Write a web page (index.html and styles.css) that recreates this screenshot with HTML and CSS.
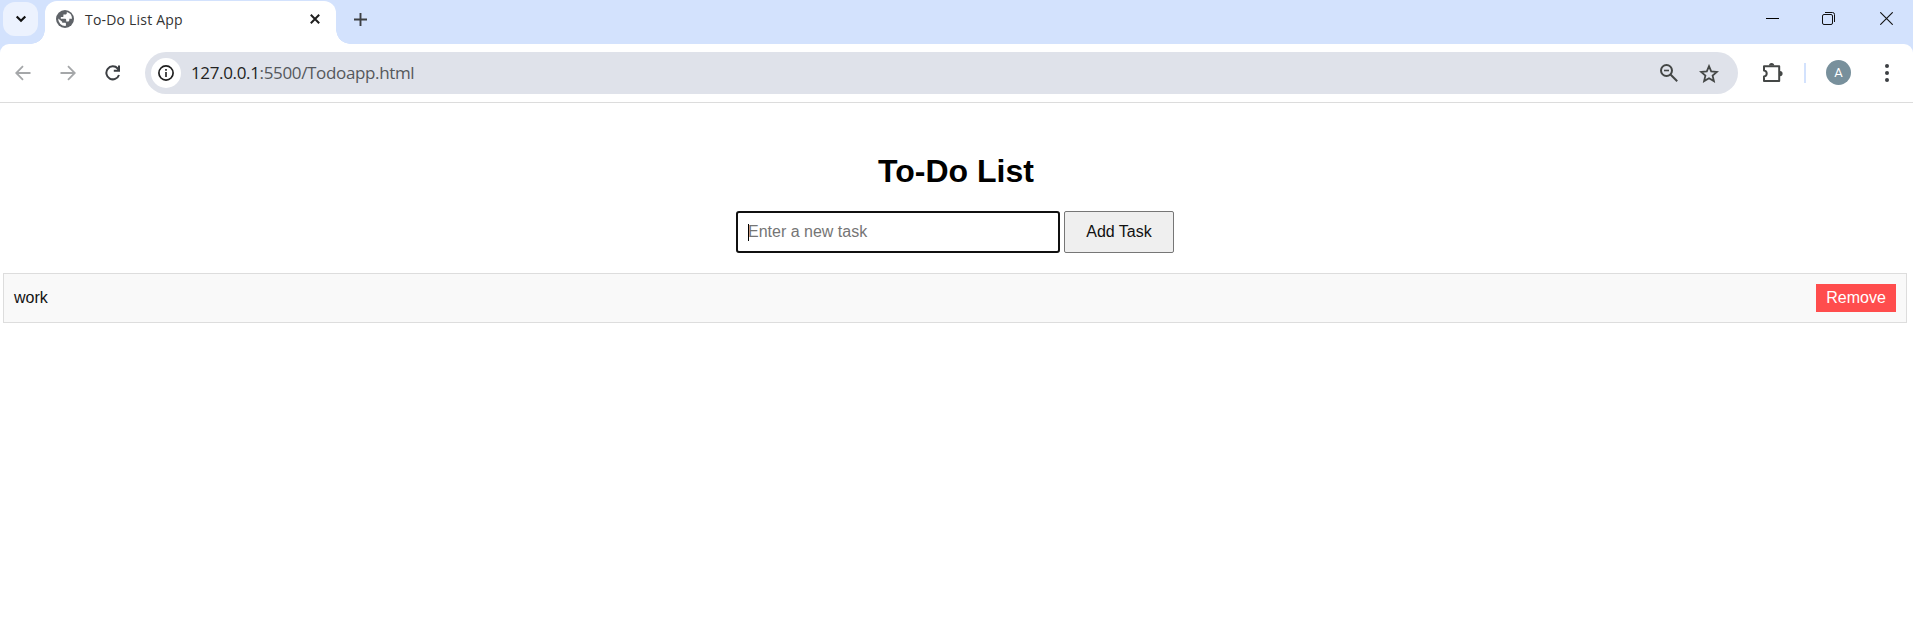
FILE: index.html
```html
<!DOCTYPE html>
<html lang="en">
<head>
<meta charset="utf-8">
<title>To-Do List App</title>
<link rel="stylesheet" href="styles.css">
</head>
<body>
<header class="browser">
  <div class="tabstrip">
    <div class="tab-search"><svg width="12" height="8" viewBox="0 0 12 8"><path d="M1.7 1.5 6 5.8l4.3-4.3" fill="none" stroke="#111" stroke-width="2.2"/></svg></div>
    <div class="tab">
      <svg class="globe" width="18" height="18" viewBox="0 0 18 18"><circle cx="9" cy="9" r="9" fill="#5f6368"/><path d="M10.800 2.100v.8c0 1-.8 1.600-1.800 1.600H7.400v1.700c0 .6-.4.9-.9.9H4.800v1.700h3.900c1 0 1.500.5 1.500 1.300v1.300h1.600c1 0 1.500-.7 1.500-1.500V8.800H16A7 7 0 0 0 10.800 2.100zM2.200 8.500l4 3.200v1.100h2.600c.8 0 1.200.4 1.200 1.100l-.3 2A7 7 0 0 1 2.200 8.500z" fill="#fff"/></svg>
      <span class="tab-title">To-Do List App</span>
      <svg class="tab-close" width="10" height="10" viewBox="0 0 10 10"><path d="M.8.8l8.400 8.400M9.200.8.8 9.200" stroke="#1f1f1f" stroke-width="2"/></svg>
    </div>
    <svg class="new-tab" width="13" height="13" viewBox="0 0 13 13"><path d="M6.500 0v13M0 6.500h13" stroke="#3c3f43" stroke-width="1.900"/></svg>
    <div class="window-controls">
      <svg width="13" height="13" viewBox="0 0 13 13"><path d="M0 6.500h13" stroke="#000"/></svg>
      <svg width="13" height="13" viewBox="0 0 13 13" fill="none" stroke="#111"><rect x=".5" y="2.500" width="10" height="10" rx="1.500"/><path d="M3 .5h7.500a2 2 0 0 1 2 2V10"/></svg>
      <svg width="13" height="13" viewBox="0 0 13 13"><path d="M.3.3l12.400 12.400M12.700.3.3 12.700" stroke="#111" stroke-width="1.100"/></svg>
    </div>
  </div>
  <div class="toolbar">
    <div class="nav">
      <svg width="16" height="16" viewBox="0 0 16 16" fill="none" stroke="#a5a7a9" stroke-width="1.800"><path d="M15.500 8H1.500M8 1.200 1.200 8 8 14.800"/></svg>
      <svg width="16" height="16" viewBox="0 0 16 16" fill="none" stroke="#a5a7a9" stroke-width="1.800"><path d="M.5 8h14M8 1.200 14.800 8 8 14.800"/></svg>
      <svg width="16" height="16" viewBox="0 0 16 16" fill="none" stroke="#3c3f43" stroke-width="2"><path d="M14 10A6.500 6.500 0 1 1 12.700 3.500L14 5M14 .4v5.400H8.800"/></svg>
    </div>
    <div class="omnibox">
      <div class="site-info"><svg width="16" height="16" viewBox="0 0 16 16"><circle cx="8" cy="8" r="7.100" fill="none" stroke="#1f1f1f" stroke-width="1.700"/><path d="M8 7v5M8 4v1.800" stroke="#1f1f1f" stroke-width="1.600"/></svg></div>
      <span class="url"><span class="host">127.0.0.1</span>:5500/Todoapp.html</span>
      <svg class="zoom-icon" width="18" height="18" viewBox="0 0 18 18" fill="none" stroke="#444746" stroke-width="2"><circle cx="6.500" cy="6.500" r="5.500"/><path d="m10.500 10.500 6.700 6.700"/><path d="M4 6.500h5" stroke-width="1.600"/></svg>
      <svg class="star" width="20" height="19" viewBox="0 0 20 19"><path d="m10 2.200 2.200 5.200 5.700.5-4.300 3.700 1.300 5.500-4.900-2.900-4.900 2.900 1.300-5.500L2.100 7.900l5.700-.5z" fill="none" stroke="#444746" stroke-width="1.800"/></svg>
    </div>
    <svg class="puzzle" width="21" height="21" viewBox="0 0 21 21"><path d="M2 4.200h15.200v14.800H2v-4.400c1.700-.2 2.700-1.400 2.700-3S3.700 8.800 2 8.600z" fill="none" stroke="#444746" stroke-width="2" stroke-linejoin="round"/><path d="M7 3.500a2.600 2.600 0 0 1 5.200 0zM18 9a2.600 2.600 0 0 1 0 5.200z" fill="#444746"/></svg>
    <div class="divider"></div>
    <div class="avatar">A</div>
    <svg class="menu" width="4" height="18" viewBox="0 0 4 18" fill="#3c3f43"><circle cx="2" cy="2" r="2"/><circle cx="2" cy="9" r="2"/><circle cx="2" cy="16" r="2"/></svg>
  </div>
</header>
<main class="page">
  <h1 class="title">To-Do List</h1>
  <div class="task-form">
    <div class="task-input"><span class="caret"></span>Enter a new task</div>
    <button class="add-button">Add Task</button>
  </div>
  <ul class="tasks">
    <li class="task"><span>work</span><button class="remove-button">Remove</button></li>
  </ul>
</main>
</body>
</html>
```
FILE: styles.css
```css
* { box-sizing: border-box; }
body { margin: 0; height: 637px; overflow: hidden; background: #fff; font-family: "Liberation Sans", Arial, sans-serif; }
svg { display: block; flex: none; }

.browser { background: #d3e2fd; }
.tabstrip { height: 44px; display: flex; padding-left: 3px; }
.tab-search { width: 35px; height: 34px; margin-top: 2px; border-radius: 12px; background: #ecf2fe; display: flex; align-items: center; justify-content: center; }
.tab { position: relative; width: 291px; height: 43px; margin: 1px 0 0 7px; padding: 0 16px 7px 11px; border-radius: 12px 12px 0 0; background: #fff; display: flex; align-items: center; }
.tab::before, .tab::after { content: ""; position: absolute; bottom: 0; width: 14px; height: 14px; }
.tab::before { left: -14px; background: radial-gradient(circle at 0 0, transparent 13.5px, #fff 14px); }
.tab::after { right: -14px; background: radial-gradient(circle at 100% 0, transparent 13.5px, #fff 14px); }
.tab-title { margin: 1px 0 0 11px; font: 400 14px/20px "Open Sans", "Noto Sans", sans-serif; letter-spacing: .2px; color: #333; white-space: nowrap; }
.tab-close { margin-left: auto; }
.new-tab { margin: 13px 0 0 18px; }
.window-controls { margin: 12px 20px 0 auto; display: flex; gap: 44px; }
.window-controls svg:nth-child(2) { margin: 0 1px 0 -1px; }

.toolbar { height: 59px; padding-right: 24px; background: #fff; border-bottom: 1px solid #dcdcdc; border-radius: 9px 9px 0 0; display: flex; align-items: center; }
.nav { width: 145px; padding-left: 15px; display: flex; gap: 29px; }
.omnibox { width: 1593px; height: 42px; padding: 0 19px 0 6px; border-radius: 21px; background: #dfe2ea; display: flex; align-items: center; }
.site-info { width: 30px; height: 30px; border-radius: 50%; background: #fff; display: flex; align-items: center; justify-content: center; }
.url { margin: 0 0 0 10px; font: 400 17px/24px "Open Sans", "Noto Sans", sans-serif; letter-spacing: -.35px; color: #55585c; white-space: nowrap; }
.host { color: #222; }
.zoom-icon { margin-left: auto; }
.star { margin-left: 21px; }
.puzzle { margin: 0 0 2px 24px; }
.divider { width: 2px; height: 20px; margin-left: 21px; background: #d3e2fd; }
.avatar { width: 25px; height: 25px; margin: 0 0 1px 20px; border-radius: 50%; background: #78909c; color: #fff; font: 13px/25px Roboto, sans-serif; text-align: center; }
.menu { margin-left: auto; }

.page { padding: 50px 6px 0 3px; }
.title { margin: 0; padding-left: 2px; font-size: 32px; line-height: 37px; text-align: center; color: #000; }
.task-form { margin-top: 21px; display: flex; justify-content: center; gap: 4px; }
.task-input { position: relative; width: 324px; height: 42px; padding: 0 10px; border: 2px solid #101010; border-radius: 3px; font-size: 16px; line-height: 37px; color: #757575; }
.caret { position: absolute; left: 10px; top: 11px; width: 1px; height: 17px; background: #000; }
.add-button { width: 110px; height: 42px; padding: 0 0 1px; border: 1px solid #767676; border-radius: 2px; background: #efefef; font: 16px "Liberation Sans", Arial, sans-serif; color: #111; }
.tasks { margin: 20px 0 0; padding: 0; list-style: none; }
.task { height: 50px; padding: 0 10px; border: 1px solid #ddd; background: #f9f9f9; display: flex; align-items: center; justify-content: space-between; font-size: 16px; color: #111; }
.remove-button { width: 80px; height: 28px; padding: 0 0 1px; border: 0; background: #ff4d4d; color: #fff; font: 16px "Liberation Sans", Arial, sans-serif; }
```
